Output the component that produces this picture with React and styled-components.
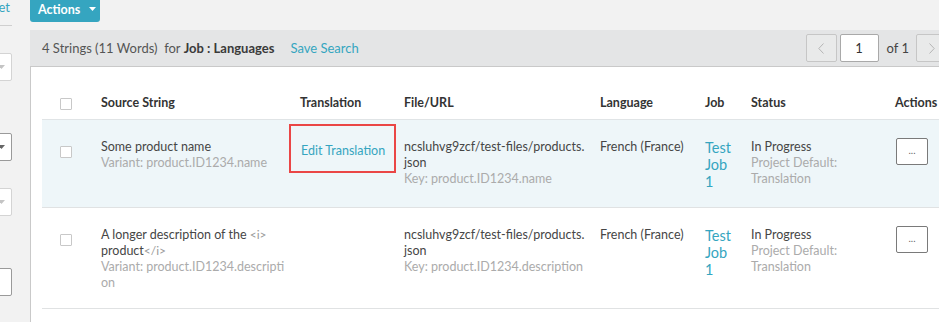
import React from "react";
import styled, { createGlobalStyle } from "styled-components";

const GlobalStyle = createGlobalStyle`
  html, body {
    margin: 0;
    padding: 0;
    background: #f2f2f2;
    overflow: hidden;
  }
  body {
    font-family: Lato, "Open Sans", sans-serif;
    font-size: 12.5px;
    color: #464646;
  }
`;

const TEAL = "#35a5c0";

const rows = [
  {
    id: 1,
    active: true,
    source: [
      [{ text: "Some product name" }],
    ],
    variant: ["Variant: product.ID1234.name"],
    file: ["ncsluhvg9zcf/test-files/products.", "json"],
    fileKey: "Key: product.ID1234.name",
    language: "French (France)",
    job: ["Test", "Job", "1"],
    status: "In Progress",
    workflow: ["Project Default:", "Translation"],
  },
  {
    id: 2,
    active: false,
    source: [
      [{ text: "A longer description of the " }, { text: "<i>", tag: true }],
      [{ text: "product" }, { text: "</i>", tag: true }],
    ],
    variant: ["Variant: product.ID1234.descripti", "on"],
    file: ["ncsluhvg9zcf/test-files/products.", "json"],
    fileKey: "Key: product.ID1234.description",
    language: "French (France)",
    job: ["Test", "Job", "1"],
    status: "In Progress",
    workflow: ["Project Default:", "Translation"],
  },
];

const Caret = ({ color = "#fff" }) => (
  <svg width="7" height="4" viewBox="0 0 7 4">
    <path d="M0 0 L7 0 L3.5 4 Z" fill={color} />
  </svg>
);

const Chevron = ({ dir }) => (
  <svg width="6" height="11" viewBox="0 0 6 11">
    <polyline
      points={dir === "left" ? "5.5,0.5 0.8,5.5 5.5,10.5" : "0.5,0.5 5.2,5.5 0.5,10.5"}
      fill="none"
      stroke="#b5b5b5"
      strokeWidth="1"
    />
  </svg>
);

const App = () => {
  return (
    <>
      <GlobalStyle />
      <Page>
        <Sidebar>
          <SidebarInner>
            <ResetLink>Reset</ResetLink>
            <Divider />
            <FilterBox $top={27} $muted>
              <BoxCaret>
                <Caret color="#c4c4c4" />
              </BoxCaret>
            </FilterBox>
            <FilterBox $top={52}>
              <BoxCaret>
                <Caret color="#666" />
              </BoxCaret>
            </FilterBox>
            <FilterBox $top={27} $muted>
              <BoxCaret>
                <Caret color="#c4c4c4" />
              </BoxCaret>
            </FilterBox>
            <FilterBox $top={52} />
          </SidebarInner>
        </Sidebar>

        <Main>
          <ActionsBar>
            <ActionsButton>
              Actions <Caret />
            </ActionsButton>
          </ActionsBar>

          <Toolbar>
            <Summary>
              4 Strings (11 Words)&nbsp; for <b>Job : Languages</b>
            </Summary>
            <SaveSearch>Save Search</SaveSearch>
            <Pager>
              <PageButton>
                <Chevron dir="left" />
              </PageButton>
              <PageInput>1</PageInput>
              <PageOf>of 1</PageOf>
              <PageButton>
                <Chevron dir="right" />
              </PageButton>
            </Pager>
          </Toolbar>

          <Panel>
            <HeaderRow>
              <CheckCell $header>
                <Checkbox />
              </CheckCell>
              <HeadCell>Source String</HeadCell>
              <HeadCell>Translation</HeadCell>
              <HeadCell>File/URL</HeadCell>
              <HeadCell>Language</HeadCell>
              <HeadCell>Job</HeadCell>
              <HeadCell>Status</HeadCell>
              <HeadCell>Actions</HeadCell>
            </HeaderRow>

            {rows.map((row) => (
              <Row key={row.id} $active={row.active}>
                <CheckCell>
                  <Checkbox />
                </CheckCell>
                <Cell>
                  {row.source.map((line, i) => (
                    <Line key={i}>
                      {line.map((part, j) =>
                        part.tag ? <Tag key={j}>{part.text}</Tag> : <span key={j}>{part.text}</span>
                      )}
                    </Line>
                  ))}
                  {row.variant.map((v) => (
                    <Muted key={v}>{v}</Muted>
                  ))}
                </Cell>
                <Cell>
                  {row.active && <EditLink>Edit Translation</EditLink>}
                </Cell>
                <Cell>
                  {row.file.map((f) => (
                    <Line key={f}>{f}</Line>
                  ))}
                  <Muted>{row.fileKey}</Muted>
                </Cell>
                <Cell>
                  <Line>{row.language}</Line>
                </Cell>
                <Cell>
                  {row.job.map((j) => (
                    <JobLine key={j}>{j}</JobLine>
                  ))}
                </Cell>
                <Cell>
                  <Line>{row.status}</Line>
                  {row.workflow.map((w) => (
                    <Muted key={w}>{w}</Muted>
                  ))}
                </Cell>
                <Cell>
                  <MoreButton>...</MoreButton>
                </Cell>
              </Row>
            ))}
          </Panel>
        </Main>
      </Page>
    </>
  );
};

const Page = styled.div`
  display: flex;
  width: 960px;
  height: 322px;
  overflow: hidden;
`;

const Sidebar = styled.div`
  width: 30px;
  flex: none;
  overflow: hidden;
`;

const SidebarInner = styled.div`
  width: 200px;
  margin-left: -188px;
  display: flex;
  flex-direction: column;
`;

const ResetLink = styled.div`
  text-align: right;
  padding-right: 2px;
  color: ${TEAL};
  font-size: 13px;
  line-height: 14px;
  height: 12px;
`;

const Divider = styled.div`
  margin-top: 13px;
  border-top: 1px solid #cfcfcf;
`;

const FilterBox = styled.div`
  position: relative;
  box-sizing: border-box;
  margin-top: ${(p) => p.$top}px;
  height: 28px;
  background: #fff;
  border: 1px solid ${(p) => (p.$muted ? "#d4d4d4" : "#9a9a9a")};
  border-radius: 2px;
`;

const BoxCaret = styled.div`
  position: absolute;
  right: 6px;
  top: 11px;
  line-height: 0;
`;

const Main = styled.div`
  width: 925px;
  flex: none;
  display: flex;
  flex-direction: column;
`;

const ActionsBar = styled.div`
  height: 30px;
`;

const ActionsButton = styled.div`
  display: inline-flex;
  align-items: center;
  gap: 9px;
  box-sizing: border-box;
  height: 22px;
  width: 70px;
  padding: 0 0 4px 8px;
  background: ${TEAL};
  color: #fff;
  font-weight: 700;
  font-size: 12.5px;
  border-radius: 0 0 3px 3px;
`;

const Toolbar = styled.div`
  height: 36px;
  display: flex;
  align-items: center;
  padding: 0 8px 0 12px;
  background: #e4e5e6;
  font-size: 13px;
`;

const Summary = styled.div`
  color: #555;
  b {
    color: #3a3a3a;
    font-weight: 700;
  }
`;

const SaveSearch = styled.div`
  margin-left: 16px;
  color: ${TEAL};
`;

const Pager = styled.div`
  margin-left: auto;
  display: flex;
  align-items: center;
`;

const PageButton = styled.div`
  box-sizing: border-box;
  width: 31px;
  height: 28px;
  display: flex;
  align-items: center;
  justify-content: center;
  border: 1px solid #c6c6c6;
  border-radius: 2px;
  background: #e9eaea;
`;

const PageInput = styled.div`
  box-sizing: border-box;
  width: 39px;
  height: 28px;
  margin-left: 3px;
  display: flex;
  align-items: center;
  justify-content: center;
  background: #fff;
  border: 1px solid #a9a9a9;
  border-radius: 2px;
  color: #333;
`;

const PageOf = styled.div`
  margin: 0 7px 0 8px;
  color: #444;
`;

const Panel = styled.div`
  flex: 1;
  background: #fff;
  border-top: 1px solid #c9c9c9;
  border-left: 1px solid #c9c9c9;
  padding-left: 11px;
`;

const columns = "47px 199px 104px 196px 105px 46px 144px 72px";

const HeaderRow = styled.div`
  display: grid;
  grid-template-columns: ${columns};
  border-bottom: 1px solid #e0e4e6;
`;

const HeadCell = styled.div`
  padding: 28px 12px 8px;
  line-height: 16px;
  font-weight: 700;
  color: #333;
  white-space: nowrap;
`;

const Row = styled.div`
  display: grid;
  grid-template-columns: ${columns};
  background: ${(p) => (p.$active ? "#eef6f9" : "#fff")};
  border-bottom: 1px solid #e0e2e3;
`;

const Cell = styled.div`
  padding: 19px 12px 17px;
  line-height: 16px;
  white-space: nowrap;
`;

const CheckCell = styled.div`
  padding: ${(p) => (p.$header ? "31px 0 0 18px" : "26px 0 0 18px")};
`;

const Checkbox = styled.div`
  box-sizing: border-box;
  width: 12px;
  height: 12px;
  background: #fff;
  border: 1px solid #c8c8c8;
  border-radius: 1px;
`;

const Line = styled.div`
  color: #464646;
`;

const Tag = styled.span`
  color: #9a9a9a;
  font-size: 12px;
`;

const Muted = styled.div`
  color: #ababab;
`;

const JobLine = styled.div`
  color: ${TEAL};
  font-size: 14.5px;
  line-height: 17px;
`;

const EditLink = styled.div`
  box-sizing: border-box;
  width: 107px;
  height: 49px;
  margin: -15px 0 0 -11px;
  padding: 17px 0 0 10px;
  border: 2px solid #ea4646;
  color: ${TEAL};
`;

const MoreButton = styled.div`
  box-sizing: border-box;
  width: 32px;
  height: 27px;
  margin: -1px 0 0 1px;
  display: flex;
  align-items: center;
  justify-content: center;
  padding-bottom: 3px;
  border: 1px solid #7a7a7a;
  border-radius: 2px;
  background: #fff;
  color: #666;
  font-size: 10px;
`;

export default App;
